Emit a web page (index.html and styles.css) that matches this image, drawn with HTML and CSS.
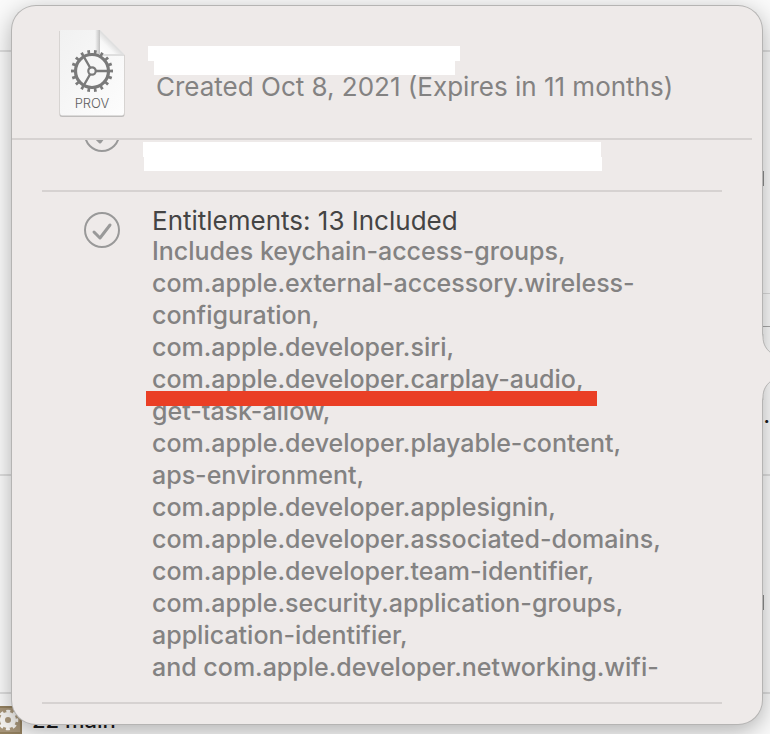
FILE: index.html
```
<!DOCTYPE html>
<html lang="en">
  <head>
    <meta charset="UTF-8" />
    <meta name="viewport" content="width=device-width, initial-scale=1.0" />
    <title>Provisioning Profile</title>
    <link rel="stylesheet" href="styles.css">
  </head>

  <body>
    <!-- Window behind the popover -->
    <div class="window">
      <div class="window-row row-top"></div>
      <div class="window-row row-first">
        <span class="mark"></span>
        <span class="hairline"></span>
        <span class="field-line"></span>
        <span class="more">...</span>
      </div>
      <div class="window-row row-second">
        <span class="mark"></span>
      </div>
      <div class="window-row row-file">
        <svg class="file-icon" viewBox="0 0 29 28" width="29" height="28">
          <rect width="29" height="28" fill="#93805f" />
          <rect width="27" height="24" y="2" fill="#a8967a" />
          <circle cx="15" cy="14" r="5.5" fill="none" stroke="#f6f4f1" stroke-width="5" />
          <circle cx="15" cy="14" r="8.8" fill="none" stroke="#f6f4f1" stroke-width="3" stroke-dasharray="3.9 3.01" stroke-dashoffset="1.95" />
        </svg>
        <span>22 main</span>
      </div>
    </div>

    <main class="popover">
      <svg class="popover-arrow" viewBox="0 0 9 66" width="9" height="66">
        <path d="M0 0 L1 3 C1 10 4 15 9 19 V47 C4 51 1 56 1 63 L0 66 Z" fill="#eeeae9" />
        <path d="M1 0 V3 C1 10 4 15 9 19 M9 47 C4 51 1 56 1 63 V66" fill="none" stroke="#b5b4b3" />
      </svg>

      <header class="header">
        <svg class="prov-icon" viewBox="0 0 68 90" width="68" height="90">
          <defs>
            <linearGradient id="paper" x1="0" y1="0" x2="1" y2="1">
              <stop offset="0" stop-color="#f1f1f1" />
              <stop offset="1" stop-color="#fdfdfd" />
            </linearGradient>
            <linearGradient id="fold" x1="0" y1="1" x2="1" y2="0">
              <stop offset="0" stop-color="#ffffff" />
              <stop offset="0.3" stop-color="#f7f7f7" />
              <stop offset="0.5" stop-color="#dcdcdc" />
            </linearGradient>
            <linearGradient id="shade" x1="0" y1="0" x2="1" y2="0">
              <stop offset="0" stop-color="#000" stop-opacity="0" />
              <stop offset="1" stop-color="#000" stop-opacity="0.22" />
            </linearGradient>
          </defs>
          <path d="M1.500 3 H42 L66.500 27 V87 Q66.500 89 64 89 H4 Q1.500 89 1.500 87 Z" fill="#bfbdbc" />
          <path d="M2 3 Q2 2 3 2 H42 L66 26 V85 Q66 87.500 64 87.500 H4 Q2 87.500 2 85 Z" fill="url(#paper)" />
          <path d="M37 2 H42 V26 H37 Z" fill="url(#shade)" />
          <path d="M42 26 H66 V28 H42 Z" fill="#dedede" />
          <path d="M42 2 L66 26 H42 Z" fill="url(#fold)" />
          <g fill="none" stroke="#7a7a7a">
            <circle cx="34" cy="43" r="16.5" stroke-width="3.200" />
            <circle cx="34" cy="43" r="19" stroke-width="4" pathLength="180" stroke-dasharray="4 6" stroke-dashoffset="2" />
            <circle cx="34" cy="43" r="3.7" stroke-width="2.2" />
            <path d="M38 43 H50 M32 39.5 L26 29 M32 46.5 L26 57" stroke-width="2.4" />
          </g>
          <text x="34" y="80" text-anchor="middle" class="prov-label">PROV</text>
        </svg>
        <div class="header-text">
          <div class="redacted redacted-name"></div>
          <div class="redacted redacted-team"></div>
          <p class="created">Created Oct 8, 2021 (Expires in 11 months)</p>
        </div>
      </header>

      <div class="scroll">
        <ul class="checks">
          <li class="check check-hidden">
            <svg class="check-icon" viewBox="0 0 36 36" width="36" height="36">
              <circle cx="18" cy="18" r="17" />
              <path d="M10 20 L16 26 L26 13" />
            </svg>
            <div class="check-text">
              <div class="redacted redacted-title"></div>
              <div class="redacted redacted-detail"></div>
            </div>
          </li>
          <li class="check">
            <svg class="check-icon" viewBox="0 0 36 36" width="36" height="36">
              <circle cx="18" cy="18" r="17" />
              <path d="M10 20 L16 26 L26 13" />
            </svg>
            <div class="check-text">
              <h2>Entitlements: 13 Included</h2>
              <p>
                Includes keychain-access-groups,<br>
                com.apple.external-accessory.wireless-<br>
                configuration,<br>
                com.apple.developer.siri,<br>
                <span class="highlight">com.apple.developer.carplay-audio,</span><br>
                get-task-allow,<br>
                com.apple.developer.playable-content,<br>
                aps-environment,<br>
                com.apple.developer.applesignin,<br>
                com.apple.developer.associated-domains,<br>
                com.apple.developer.team-identifier,<br>
                com.apple.security.application-groups,<br>
                application-identifier,<br>
                and com.apple.developer.networking.wifi-
              </p>
            </div>
          </li>
        </ul>
      </div>
    </main>
  </body>
</html>
```

FILE: styles.css
```
* {
  box-sizing: border-box;
}

body {
  margin: 0;
  min-height: 100vh;
  overflow: hidden;
  position: relative;
  background: #fafafa;
  font-family: Inter, "Liberation Sans", sans-serif;
  font-size: 25px;
  color: #838282;
}

h2,
p,
ul {
  margin: 0;
  padding: 0;
}

/* Window behind */
.window {
  position: absolute;
  inset: 0;
  overflow: hidden;
}

.window-row {
  position: relative;
  border-bottom: 2px solid #dedede;
}

.row-top {
  height: 52px;
}

.row-first {
  height: 424px;
}

.row-second {
  height: 218px;
}

.row-file {
  display: flex;
  gap: 10px;
  padding-top: 12px;
  margin-left: -7px;
  line-height: 28px;
  font-size: 22px;
  font-weight: 500;
  color: #1c1c1e;
  border: none;
}

.mark {
  position: absolute;
  top: 119px;
  right: 6px;
  width: 2px;
  height: 15px;
  background: #8e8e8e;
}

.hairline,
.field-line {
  position: absolute;
  right: 0;
  width: 8px;
  height: 1px;
  background: #dadada;
}

.hairline {
  top: 241px;
}

.field-line {
  top: 274px;
  background: #a8a8a8;
}

.more {
  position: absolute;
  top: 352px;
  right: 0;
  line-height: 24px;
  font-weight: 600;
  font-size: 20px;
  color: #1c1c1e;
}

/* Popover */
.popover {
  position: relative;
  margin: 6px 8px 10px 12px;
  background: #eeeae9;
  border-radius: 24px;
  box-shadow: 0 0 0 1px #b5b4b3, 0 6px 24px rgba(0, 0, 0, 0.32);
}

.popover-arrow {
  position: absolute;
  top: 328px;
  right: -9px;
}

.header {
  display: flex;
  gap: 22px;
  height: 134px;
  margin-right: 10px;
  padding: 22px 0 0 46px;
  border-bottom: 2px solid #d6d2d1;
}

.prov-icon {
  flex: none;
}

.prov-label {
  font-size: 13px;
  font-weight: 300;
  fill: #606060;
}

.header-text {
  flex: 1;
  padding-top: 18px;
}

.created {
  margin-left: 8px;
  font-size: 26px;
  line-height: 24px;
}

.redacted {
  height: 15px;
  background: #fff;
}

.redacted-name {
  width: 312px;
}

.redacted-team {
  width: 301px;
  height: 14px;
  margin-left: 6px;
}

.scroll {
  overflow: hidden;
  border-radius: 0 0 24px 24px;
  padding-bottom: 20px;
}

.checks {
  margin: -44px 40px 0 30px;
  list-style: none;
}

.check {
  display: flex;
  gap: 32px;
  padding: 15px 0 19px 42px;
  border-bottom: 2px solid #d6d2d1;
}

.check-icon {
  flex: none;
  margin-top: 5px;
  fill: none;
  stroke: #999;
  stroke-width: 2;
  stroke-linecap: round;
  stroke-linejoin: round;
}

.check-icon path {
  stroke-width: 3;
}

.check-text {
  flex: 1;
}

.check-text h2 {
  font-size: 26px;
  font-weight: 400;
  line-height: 28px;
  color: #444;
}

.check-text p {
  font-weight: 500;
  line-height: 32px;
  white-space: nowrap;
}

.check-hidden .check-text {
  padding-top: 31px;
  margin-left: -9px;
}

.redacted-title {
  width: 458px;
}

.redacted-detail {
  width: 458px;
  height: 14px;
  margin-left: 1px;
}

/* Red underline over the CarPlay entitlement */
.highlight {
  position: relative;
}

.highlight::after {
  content: "";
  position: absolute;
  left: -6px;
  right: -14px;
  bottom: -12px;
  height: 15px;
  background: #ea3f25;
}
```
